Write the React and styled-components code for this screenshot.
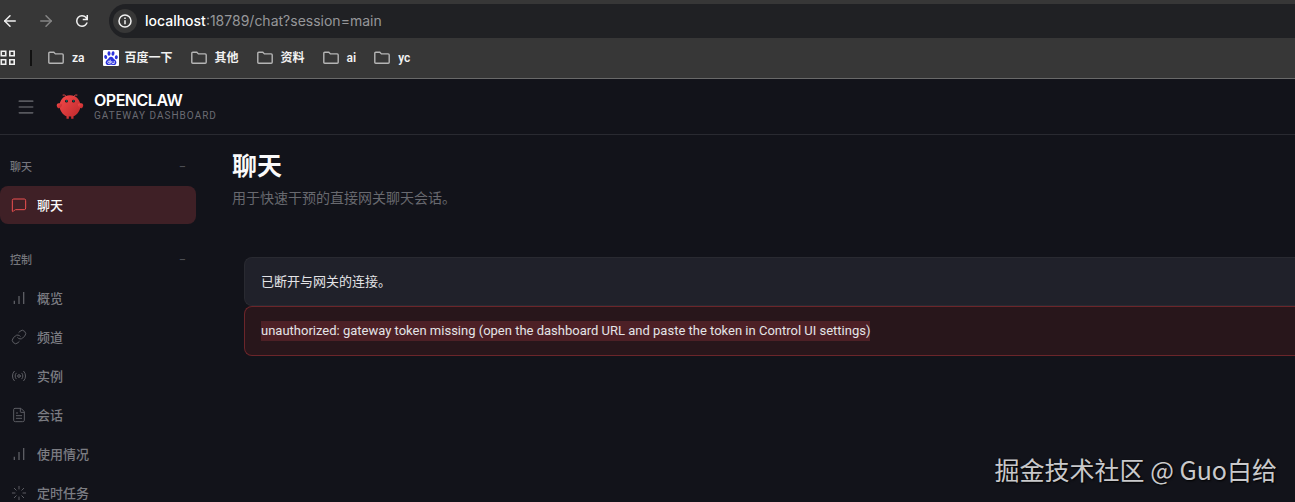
import React from "react";
import styled, { createGlobalStyle } from "styled-components";
import {
  ArrowLeft,
  ArrowRight,
  FileText,
  Link as LinkIcon,
  Loader,
  Menu,
  MessageSquare,
  Radio,
} from "lucide-react";

const controlItems = [
  { label: "概览", icon: "bars" },
  { label: "频道", icon: "link" },
  { label: "实例", icon: "radio" },
  { label: "会话", icon: "file" },
  { label: "使用情况", icon: "bars" },
  { label: "定时任务", icon: "loader" },
];

const bookmarks = [
  { label: "za" },
  { label: "百度一下", baidu: true },
  { label: "其他" },
  { label: "资料" },
  { label: "ai" },
  { label: "yc" },
];

const BarsIcon = () => (
  <svg width="16" height="16" viewBox="0 0 24 24" fill="none" stroke="currentColor" strokeWidth="2">
    <path d="M5 21v-5M12 21V9M19 21V3" />
  </svg>
);

const icons = {
  bars: <BarsIcon />,
  link: <LinkIcon size={16} strokeWidth={1.5} />,
  radio: <Radio size={16} strokeWidth={1.5} />,
  file: <FileText size={16} strokeWidth={1.5} />,
  loader: <Loader size={16} strokeWidth={1.5} />,
};

const ReloadIcon = () => (
  <svg width="18" height="18" viewBox="0 0 24 24" fill="currentColor">
    <path d="M12 20q-3.35 0-5.675-2.325T4 12t2.325-5.675T12 4q1.725 0 3.3.712T18 6.75V4h2v7h-7V9h4.2q-.8-1.4-2.187-2.2T12 6Q9.5 6 7.75 7.75T6 12t1.75 4.25T12 18q1.925 0 3.475-1.1T17.65 14h2.1q-.7 2.65-2.85 4.325T12 20" />
  </svg>
);

const InfoIcon = () => (
  <svg width="14" height="14" viewBox="0 0 14 14" fill="none" stroke="currentColor" strokeWidth="1.5">
    <circle cx="7" cy="7" r="6" />
    <path d="M7 6.3v4M7 3.6v1.5" />
  </svg>
);

const AppsIcon = () => (
  <svg width="16" height="16" viewBox="0 0 16 16" fill="none" stroke="currentColor" strokeWidth="1.6">
    <path d="M1.300 1.300h4.400v4.400H1.300zM9.800 1.300h4.400v4.400H9.800zM1.300 9.800h4.400v4.400H1.300zM9.800 9.800h4.400v4.400H9.800z" />
  </svg>
);

const FolderIcon = () => (
  <svg width="16" height="14" viewBox="0 0 16 14" fill="none" stroke="currentColor" strokeWidth="1.4">
    <path d="M.8 2.2q0-1 1-1h4l1.600 1.700h6.800q1 0 1 1v7.300q0 1-1 1H1.800q-1 0-1-1z" />
  </svg>
);

const BaiduIcon = () => (
  <svg width="16" height="16" viewBox="0 0 16 16">
    <rect width="16" height="16" rx="1" fill="#fff" />
    <g fill="#2b32dc">
      <ellipse cx="2.700" cy="7" rx="1.500" ry="2" transform="rotate(-12 2.700 7)" />
      <ellipse cx="6" cy="3.500" rx="1.500" ry="2.200" />
      <ellipse cx="10" cy="3.500" rx="1.500" ry="2.200" transform="rotate(10 10 3.500)" />
      <ellipse cx="13.300" cy="7.200" rx="1.500" ry="2" transform="rotate(8 13.300 7.200)" />
      <path d="M8 6.700c2 0 2.200 1.700 3.600 2.900 1.400 1.100 2.100 2.200 1.700 3.700-.5 1.900-2.200 1.900-3.500 1.700-1.200-.2-2.400-.2-3.600 0-1.500.2-3.100 0-3.500-1.700-.4-1.500.5-2.700 1.800-3.700C5.800 8.500 6 6.700 8 6.700z" />
    </g>
    <g fill="none" stroke="#fff" strokeWidth=".8">
      <circle cx="5.900" cy="12.300" r="1.200" />
      <path d="M7.200 9.700v3.900M8.800 11v1.700q0 .8.900.8h1.500V11" />
    </g>
  </svg>
);

const ClawLogo = () => (
  <svg width="28" height="28" viewBox="0 0 120 120" aria-hidden="true">
    <defs>
      <linearGradient id="claw" x1="0" y1="0" x2="1" y2="1">
        <stop offset="0" stopColor="#f54a4a" />
        <stop offset="1" stopColor="#bc282b" />
      </linearGradient>
    </defs>
    <g fill="url(#claw)">
      <path d="M60 10c-30 0-45 25-45 45s15 40 30 45v10h10v-10s5 2 10 0v10h10v-10c15-5 30-25 30-45S90 10 60 10z" />
      <path d="M20 45C5 40 0 50 5 60s15 5 20-5c3-7 0-10-5-10z" />
      <path d="M100 45c15-5 20 5 15 15s-15 5-20-5c-3-7 0-10 5-10z" />
    </g>
    <path d="M45 15Q35 5 30 8M75 15q10-10 15-7" fill="none" stroke="#f04848" strokeWidth="4" strokeLinecap="round" />
    <circle cx="45" cy="35" r="6" fill="#12131a" />
    <circle cx="75" cy="35" r="6" fill="#12131a" />
    <circle cx="46" cy="34" r="2.500" fill="#00b5a3" />
    <circle cx="76" cy="34" r="2.500" fill="#00b5a3" />
  </svg>
);

export default function App() {
  return (
    <Page>
      <GlobalStyle />
      <Browser>
        <Toolbar>
          <ToolButton aria-label="Back">
            <ArrowLeft size={18} />
          </ToolButton>
          <ToolButton aria-label="Forward" $dim>
            <ArrowRight size={18} />
          </ToolButton>
          <ToolButton aria-label="Reload">
            <ReloadIcon />
          </ToolButton>
          <AddressBar>
            <SiteInfo aria-label="Site information">
              <InfoIcon />
            </SiteInfo>
            <Address>
              <b>localhost</b>:18789/chat?session=main
            </Address>
          </AddressBar>
        </Toolbar>
        <Bookmarks>
          <AppsButton aria-label="Apps">
            <AppsIcon />
          </AppsButton>
          <Divider />
          {bookmarks.map((item) => (
            <Bookmark href="#" key={item.label} $tight={item.baidu}>
              {item.baidu ? <BaiduIcon /> : <FolderIcon />}
              {item.label}
            </Bookmark>
          ))}
        </Bookmarks>
      </Browser>

      <Topbar>
        <MenuButton aria-label="Menu">
          <Menu size={20} strokeWidth={2} />
        </MenuButton>
        <ClawLogo />
        <Brand>
          <BrandTitle>OPENCLAW</BrandTitle>
          <BrandSub>GATEWAY DASHBOARD</BrandSub>
        </Brand>
      </Topbar>

      <Shell>
        <Sidebar>
          <NavGroup>
            <NavLabel>
              聊天<span>−</span>
            </NavLabel>
            <NavItem href="#" $active>
              <MessageSquare size={16} strokeWidth={1.5} />
              聊天
            </NavItem>
          </NavGroup>
          <NavGroup>
            <NavLabel>
              控制<span>−</span>
            </NavLabel>
            {controlItems.map((item) => (
              <NavItem href="#" key={item.label}>
                {icons[item.icon]}
                {item.label}
              </NavItem>
            ))}
          </NavGroup>
        </Sidebar>
        <Content>
          <Title>聊天</Title>
          <Subtitle>用于快速干预的直接网关聊天会话。</Subtitle>
          <Callouts>
            <Callout>已断开与网关的连接。</Callout>
            <Callout $danger>
              <Selected>
                unauthorized: gateway token missing (open the dashboard URL and paste the token in Control UI settings)
              </Selected>
            </Callout>
          </Callouts>
        </Content>
      </Shell>
      <Watermark>掘金技术社区 @ Guo白给</Watermark>
    </Page>
  );
}

const GlobalStyle = createGlobalStyle`
  * {
    box-sizing: border-box;
  }

  body {
    margin: 0;
    background: #12131a;
    font-family: Inter, "Noto Sans CJK SC", sans-serif;
  }

  button {
    display: flex;
    align-items: center;
    justify-content: center;
    padding: 0;
    border: 0;
    background: none;
    color: inherit;
    font: inherit;
  }

  a {
    color: inherit;
    text-decoration: none;
  }

  svg {
    flex-shrink: 0;
  }
`;

const Page = styled.div`
  position: relative;
  display: flex;
  flex-direction: column;
  height: 100vh;
  overflow: hidden;
  color: #e4e4e7;
`;

const Browser = styled.header`
  flex-shrink: 0;
  background: #373737;
  border-bottom: 1px solid #696969;
  color: #f1f1f1;
`;

const Toolbar = styled.div`
  display: flex;
  align-items: center;
  gap: 18px;
  padding: 4px 0 0 1px;
`;

const ToolButton = styled.button`
  width: 18px;
  height: 18px;
  color: ${(props) => (props.$dim ? "#858585" : "#f1f1f1")};
`;

const AddressBar = styled.div`
  display: flex;
  flex: 1;
  align-items: center;
  gap: 8px;
  height: 34px;
  padding-left: 4px;
  border-radius: 17px 0 0 17px;
  background: #202124;
`;

const SiteInfo = styled.button`
  width: 24px;
  height: 24px;
  border-radius: 50%;
  background: #373737;
`;

const Address = styled.span`
  color: #96979a;
  font-size: 14px;
  line-height: 20px;

  b {
    color: #fff;
    font-weight: 500;
  }
`;

const Bookmarks = styled.nav`
  display: flex;
  align-items: center;
  gap: 18px;
  height: 40px;
`;

const AppsButton = styled.button`
  width: 16px;
  height: 16px;
`;

const Divider = styled.span`
  width: 2px;
  height: 16px;
  margin: 0 -2px 0 -4px;
  background: #111;
`;

const Bookmark = styled.a`
  display: flex;
  align-items: center;
  gap: ${(props) => (props.$tight ? "6px" : "8px")};
  font-family: Roboto, "Noto Sans CJK SC", sans-serif;
  font-size: 12px;
  font-weight: 600;
  line-height: 16px;

  svg {
    color: #b5b5b5;
  }
`;

const Topbar = styled.header`
  display: flex;
  flex-shrink: 0;
  align-items: center;
  height: 56px;
  padding-left: 16px;
  border-bottom: 1px solid #292a31;
`;

const MenuButton = styled.button`
  width: 20px;
  height: 20px;
  margin-right: 20px;
  color: #57585e;
`;

const Brand = styled.div`
  margin-left: 10px;
`;

const BrandTitle = styled.div`
  color: #fff;
  font-size: 16px;
  font-weight: 600;
  line-height: 18px;
  letter-spacing: -0.03em;
`;

const BrandSub = styled.div`
  color: #6a6b72;
  font-family: Roboto, sans-serif;
  font-size: 10px;
  line-height: 14px;
  letter-spacing: 0.1em;
`;

const Shell = styled.div`
  display: grid;
  flex: 1;
  grid-template-columns: 196px 1fr;
  gap: 36px;
  min-height: 0;
`;

const Sidebar = styled.aside`
  display: flex;
  flex-direction: column;
  gap: 20px;
  padding-top: 16px;
`;

const NavGroup = styled.nav`
  display: flex;
  flex-direction: column;
  gap: 1px;
`;

const NavLabel = styled.button`
  justify-content: space-between;
  height: 30px;
  margin-bottom: 4px;
  padding: 0 10px;
  color: #75767c;
  font-size: 11px;
  font-weight: 500;

  span {
    color: #4c4d53;
  }
`;

const NavItem = styled.a`
  display: flex;
  flex-shrink: 0;
  align-items: center;
  gap: 10px;
  height: 38px;
  padding: 0 11px;
  border-radius: 8px;
  background: ${(props) => (props.$active ? "#3f2026" : "transparent")};
  color: ${(props) => (props.$active ? "#fafafa" : "#7b7c82")};
  font-size: 13px;
  font-weight: 500;
  line-height: 18px;

  svg {
    color: ${(props) => (props.$active ? "#ee5050" : "#5c5d63")};
  }
`;

const Content = styled.main`
  padding-top: 13px;
`;

const Title = styled.h1`
  margin: 0;
  color: #fafafa;
  font-size: 25px;
  font-weight: 700;
  line-height: 36px;
`;

const Subtitle = styled.p`
  margin: 4px 0 0;
  color: #68696f;
  font-size: 14px;
  line-height: 20px;
`;

const Callouts = styled.section`
  margin: 49px 0 0 12px;
`;

const Callout = styled.div`
  padding: 14px 16px;
  border: 1px solid ${(props) => (props.$danger ? "#6b252a" : "#292a31")};
  border-right: 0;
  border-radius: 8px 0 0 8px;
  background: ${(props) => (props.$danger ? "#28161b" : "#20212a")};
  font-family: Roboto, "Noto Sans CJK SC", sans-serif;
  font-size: 13px;
  line-height: 19px;
`;

const Selected = styled.span`
  display: inline-block;
  background: #4d2026;
  line-height: 20px;
`;

const Watermark = styled.div`
  position: absolute;
  right: 18px;
  bottom: 14px;
  color: #c9c9cb;
  font-family: "Noto Sans CJK SC", sans-serif;
  font-size: 25px;
  line-height: 38px;
  text-shadow: 1px 1px 2px #000;
`;
